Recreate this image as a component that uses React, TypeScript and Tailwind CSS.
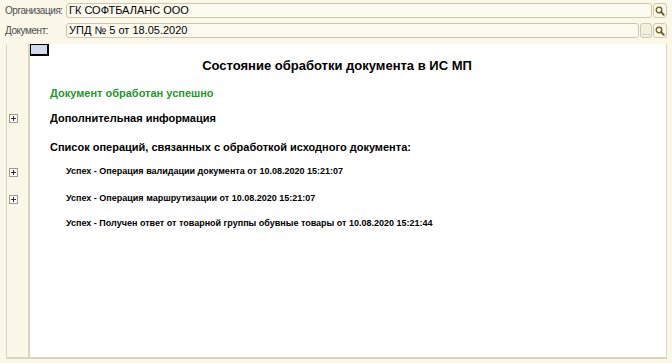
import React from 'react';

const font = { fontFamily: '"Liberation Sans", Arial, sans-serif' };

function SearchIcon() {
  return (
    <svg width="10" height="10" viewBox="0 0 10 10" fill="none">
      <circle cx="4" cy="4" r="2.8" stroke="#6b5a1e" strokeWidth="1.3" />
      <path d="M6 6 L8.8 8.8" stroke="#6b5a1e" strokeWidth="1.8" strokeLinecap="round" />
    </svg>
  );
}

function Plus() {
  return (
    <div className="w-[9px] h-[9px] border border-[#a39d84] bg-[#fdfcf4] flex items-center justify-center">
      <svg width="7" height="7" viewBox="0 0 7 7">
        <path d="M3.5 1 V6 M1 3.5 H6" stroke="#333" strokeWidth="1" />
      </svg>
    </div>
  );
}

function Row({ h, plus, children }: { h: string; plus?: boolean; children?: React.ReactNode }) {
  return (
    <div className={`flex shrink-0 ${h}`}>
      <div className="w-[23px] shrink-0 border-r-2 border-[#d9d4bb] bg-[#fbf8e9] flex items-center pl-[2px]">
        {plus && <Plus />}
      </div>
      <div className="flex-1 bg-white flex items-center">{children}</div>
    </div>
  );
}

export default function App() {
  return (
    <div className="w-[672px] h-[363px] bg-[#fbf8e9] flex flex-col" style={font}>
      {/* Организация */}
      <div className="flex items-center h-[15px] mt-[3px] pl-[5px] pr-[5px]">
        <span className="w-[61px] shrink-0 whitespace-nowrap text-[10px] tracking-[-0.45px] text-[#4d4d4d]">Организация:</span>
        <div className="flex-1 h-[15px] border border-[#cdc8ad] rounded-[3px] bg-[#fdfbef] text-[11px] text-black flex items-center pl-[2px]">
          ГК СОФТБАЛАНС ООО
        </div>
        <div className="w-[14px] h-[15px] ml-[1px] border border-[#cdc8ad] rounded-[3px] bg-[#fbf8e9] flex items-center justify-center">
          <SearchIcon />
        </div>
      </div>

      {/* Документ */}
      <div className="flex items-center h-[15px] mt-[5px] pl-[5px] pr-[5px]">
        <span className="w-[61px] shrink-0 whitespace-nowrap text-[10px] tracking-[-0.45px] text-[#4d4d4d]">Документ:</span>
        <div className="flex-1 h-[15px] border border-[#cdc8ad] rounded-[3px] bg-[#fdfbef] text-[11px] text-black flex items-center pl-[2px]">
          УПД № 5 от 18.05.2020
        </div>
        <div className="w-[12px] h-[15px] ml-[1px] border border-[#cdc8ad] rounded-[3px] bg-[#f3f0e0] flex items-end justify-center text-[9px] leading-[10px] text-[#9a9a9a]">
          ...
        </div>
        <div className="w-[14px] h-[15px] ml-[1px] border border-[#cdc8ad] rounded-[3px] bg-[#fbf8e9] flex items-center justify-center">
          <SearchIcon />
        </div>
      </div>

      {/* Основная панель */}
      <div className="mt-[6px] ml-[6px] mr-[5px] h-[315px] border-l border-b-2 border-r border-[#d9d4bb] flex flex-col">
        <Row h="h-[12px]">
          <div className="w-[19px] h-[12px] bg-[#d2daf0] border-t border-l border-r-2 border-b-2 border-black self-start" />
        </Row>
        <Row h="h-[20px]">
          <div className="w-full text-center pr-[22px] text-[13px] font-bold text-black">
            Состояние обработки документа в ИС МП
          </div>
        </Row>
        <Row h="h-[7px]" />
        <Row h="h-[20px]">
          <span className="ml-[20px] text-[11px] font-bold text-[#22992a]">Документ обработан успешно</span>
        </Row>
        <Row h="h-[6px]" />
        <Row h="h-[18px]" plus>
          <span className="ml-[20px] text-[11px] font-bold text-black">Дополнительная информация</span>
        </Row>
        <Row h="h-[11px]" />
        <Row h="h-[18px]">
          <span className="ml-[20px] text-[11px] font-bold text-black">
            Список операций, связанных с обработкой исходного документа:
          </span>
        </Row>
        <Row h="h-[7px]" />
        <Row h="h-[18px]" plus>
          <span className="ml-[36px] text-[9px] font-bold text-black">
            Успех - Операция валидации документа от 10.08.2020 15:21:07
          </span>
        </Row>
        <Row h="h-[9px]" />
        <Row h="h-[18px]" plus>
          <span className="ml-[36px] text-[9px] font-bold text-black">
            Успех - Операция маршрутизации от 10.08.2020 15:21:07
          </span>
        </Row>
        <Row h="h-[7px]" />
        <Row h="h-[18px]">
          <span className="ml-[36px] text-[9px] font-bold text-black">
            Успех - Получен ответ от товарной группы обувные товары от 10.08.2020 15:21:44
          </span>
        </Row>
        <div className="flex flex-1">
          <div className="w-[23px] shrink-0 border-r-2 border-[#d9d4bb] bg-[#fbf8e9]" />
          <div className="flex-1 bg-white" />
        </div>
      </div>
    </div>
  );
}
